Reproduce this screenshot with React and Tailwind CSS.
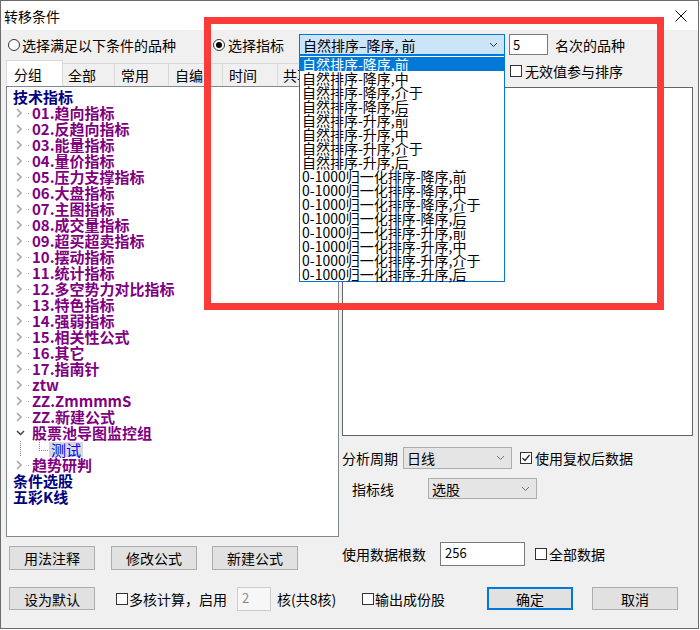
import React from "react";

function Radio({ checked }) {
  return (
    <span className="w-[12px] h-[12px] rounded-full border border-[#333] bg-white flex items-center justify-center shrink-0">
      {checked && <span className="w-[6px] h-[6px] rounded-full bg-black" />}
    </span>
  );
}

function Check({ checked }) {
  return (
    <span className="w-[12px] h-[12px] border border-[#333] bg-white shrink-0 flex items-center justify-center">
      {checked && (
        <svg width="10" height="10" viewBox="0 0 10 10">
          <path d="M1.5 5 L4 7.5 L8.5 2" stroke="#222" strokeWidth="1.2" fill="none" />
        </svg>
      )}
    </span>
  );
}

function Down({ color = "#555" }) {
  return (
    <svg width="9" height="6" viewBox="0 0 9 6">
      <path d="M1 1 L4.5 4.5 L8 1" stroke={color} strokeWidth="1" fill="none" />
    </svg>
  );
}

function Btn({ children, primary, className = "" }) {
  return (
    <div
      className={
        "h-[23px] w-[86px] flex items-center justify-center text-[14px] leading-[16px] bg-[#e1e1e1] text-black shrink-0 " +
        (primary ? "border-2 border-[#0078d7] " : "border border-[#adadad] ") +
        className
      }
    >
      {children}
    </div>
  );
}

const children = [
  "01.趋向指标",
  "02.反趋向指标",
  "03.能量指标",
  "04.量价指标",
  "05.压力支撑指标",
  "06.大盘指标",
  "07.主图指标",
  "08.成交量指标",
  "09.超买超卖指标",
  "10.摆动指标",
  "11.统计指标",
  "12.多空势力对比指标",
  "13.特色指标",
  "14.强弱指标",
  "15.相关性公式",
  "16.其它",
  "17.指南针",
  "ztw",
  "ZZ.ZmmmmS",
  "ZZ.新建公式",
];

const listItems = [
  "自然排序-降序,前",
  "自然排序-降序,中",
  "自然排序-降序,介于",
  "自然排序-降序,后",
  "自然排序-升序,前",
  "自然排序-升序,中",
  "自然排序-升序,介于",
  "自然排序-升序,后",
  "0-1000归一化排序-降序,前",
  "0-1000归一化排序-降序,中",
  "0-1000归一化排序-降序,介于",
  "0-1000归一化排序-降序,后",
  "0-1000归一化排序-升序,前",
  "0-1000归一化排序-升序,中",
  "0-1000归一化排序-升序,介于",
  "0-1000归一化排序-升序,后",
];

function ChildRow({ text, expanded }) {
  return (
    <div className="h-[16px] flex items-center">
      <svg width="25" height="16" viewBox="0 0 25 16" className="shrink-0">
        {expanded ? (
          <path d="M10 6 L13.5 9.5 L17 6" stroke="#404040" strokeWidth="1.5" fill="none" />
        ) : (
          <path d="M10 4 L14 8 L10 12" stroke="#a6a6a6" strokeWidth="1.6" fill="none" />
        )}
        {!expanded && <rect x="21" y="8" width="1" height="1" fill="#888" />}
      </svg>
      <span className="text-[15px] leading-[16px] font-bold text-[#800080] whitespace-nowrap">{text}</span>
    </div>
  );
}

export default function App() {
  return (
    <div className="relative w-[699px] h-[629px] border border-[#6b6b6b] bg-[#f0f0f0] font-['Noto_Sans_CJK_SC',sans-serif] text-black overflow-hidden">
      {/* Title bar */}
      <div className="h-[29px] bg-white flex items-center justify-between">
        <span className="pl-[3px] text-[14px] leading-[16px]">转移条件</span>
        <svg width="12" height="12" viewBox="0 0 12 12" className="mr-[11px]">
          <path d="M0.5 0.5 L11.5 11.5 M11.5 0.5 L0.5 11.5" stroke="#111" strokeWidth="1" />
        </svg>
      </div>

      {/* Row 1 */}
      <div className="mt-[4px] h-[21px] flex items-center pl-[7px]">
        <div className="w-[205px] flex items-center gap-[2px] shrink-0">
          <Radio />
          <span className="text-[14px] leading-[16px] whitespace-nowrap">选择满足以下条件的品种</span>
        </div>
        <div className="w-[86px] flex items-center gap-[3px] shrink-0">
          <Radio checked />
          <span className="text-[14px] leading-[16px] whitespace-nowrap">选择指标</span>
        </div>
        <div className="w-[206px] h-[21px] border border-[#0078d7] bg-[#cce4f7] flex items-center justify-between pl-[3px] pr-[6px] shrink-0">
          <span className="text-[14px] leading-[16px] whitespace-nowrap">自然排序–降序, 前</span>
          <Down color="#333" />
        </div>
        <div className="ml-[4px] w-[39px] h-[21px] border border-[#7a7a7a] bg-white flex items-center pl-[3px] shrink-0">
          <span className="text-[13px] leading-[14px]">5</span>
        </div>
        <span className="ml-[7px] text-[14px] leading-[16px] whitespace-nowrap">名次的品种</span>
      </div>

      {/* Columns */}
      <div className="mt-[5px] flex items-start">
        {/* Left column */}
        <div className="ml-[5px] w-[333px] flex flex-col shrink-0">
          <div className="h-[26px] flex items-end overflow-hidden">
            <div className="w-[57px] h-[26px] bg-white border-t border-l border-r border-[#d9d9d9] pl-[7px] flex items-center text-[14px] leading-[16px] shrink-0">分组</div>
            <div className="w-[52px] h-[23px] border-t border-r border-[#d9d9d9] pl-[5px] flex items-center text-[14px] leading-[16px] shrink-0">全部</div>
            <div className="w-[54px] h-[23px] border-t border-r border-[#d9d9d9] pl-[6px] flex items-center text-[14px] leading-[16px] shrink-0">常用</div>
            <div className="w-[54px] h-[23px] border-t border-r border-[#d9d9d9] pl-[6px] flex items-center text-[14px] leading-[16px] shrink-0">自编</div>
            <div className="w-[55px] h-[23px] border-t border-r border-[#d9d9d9] pl-[6px] flex items-center text-[14px] leading-[16px] shrink-0">时间</div>
            <div className="w-[55px] h-[23px] border-t border-r border-[#d9d9d9] pl-[5px] flex items-center text-[14px] leading-[16px] shrink-0">共享</div>
          </div>
          <div className="h-[451px] border border-[#828790] bg-white pt-[2px] pl-[6px] flex flex-col">
            <div className="h-[16px] flex items-center text-[15px] leading-[16px] font-bold text-[#000080]">技术指标</div>
            <div className="-ml-[6px] flex flex-col">
              {children.map((t) => (
                <ChildRow key={t} text={t} />
              ))}
              <ChildRow text="股票池导图监控组" expanded />
              <div className="h-[16px] flex items-center">
                <svg width="42" height="16" viewBox="0 0 42 16" className="shrink-0">
                  <line x1="13.5" y1="0" x2="13.5" y2="16" stroke="#888" strokeDasharray="1 1" />
                  <line x1="32.5" y1="1" x2="32.5" y2="9" stroke="#888" strokeDasharray="1 1" />
                  <line x1="32" y1="9.5" x2="41" y2="9.5" stroke="#888" strokeDasharray="1 1" />
                </svg>
                <span className="h-[15px] bg-[#d9d9d9] px-[2px] text-[15px] leading-[15px] text-[#0000ff]">测试</span>
              </div>
              <ChildRow text="趋势研判" />
            </div>
            <div className="h-[16px] flex items-center text-[15px] leading-[16px] font-bold text-[#000080]">条件选股</div>
            <div className="h-[16px] flex items-center text-[15px] leading-[16px] font-bold text-[#000080]">五彩K线</div>
          </div>
          <div className="mt-[9px] h-[24px] flex items-start">
            <Btn className="ml-[3px] h-[24px]">用法注释</Btn>
            <Btn className="ml-[16px] w-[85px] h-[24px]">修改公式</Btn>
            <Btn className="ml-[15px] w-[85px] h-[24px]">新建公式</Btn>
          </div>
        </div>

        {/* Right column */}
        <div className="ml-[3px] w-[351px] flex flex-col shrink-0">
          <div className="h-[27px] pt-[5px] pl-[168px] flex items-start gap-[3px]">
            <Check />
            <span className="text-[14px] leading-[13px] whitespace-nowrap">无效值参与排序</span>
          </div>
          <div className="h-[349px] border border-[#646464] bg-white" />
          <div className="mt-[11px] h-[22px] flex items-center">
            <span className="text-[14px] leading-[16px] whitespace-nowrap">分析周期</span>
            <div className="ml-[5px] w-[109px] h-[22px] border border-[#adadad] bg-[#e5e5e5] flex items-center justify-between pl-[3px] pr-[6px]">
              <span className="text-[14px] leading-[16px]">日线</span>
              <Down color="#707070" />
            </div>
            <div className="ml-[8px] flex items-center gap-[3px]">
              <Check checked />
              <span className="text-[14px] leading-[16px] whitespace-nowrap">使用复权后数据</span>
            </div>
          </div>
          <div className="mt-[9px] h-[21px] flex items-center">
            <span className="ml-[10px] w-[76px] text-[14px] leading-[16px] whitespace-nowrap">指标线</span>
            <div className="w-[109px] h-[21px] border border-[#adadad] bg-[#e5e5e5] flex items-center justify-between pl-[3px] pr-[6px]">
              <span className="text-[14px] leading-[16px]">选股</span>
              <Down color="#707070" />
            </div>
          </div>
          <div className="mt-[43px] h-[24px] flex items-center">
            <span className="w-[98px] text-[14px] leading-[16px] whitespace-nowrap">使用数据根数</span>
            <div className="w-[85px] h-[24px] border border-[#7a7a7a] bg-white pl-[4px] pt-[3px]">
              <span className="block text-[13px] leading-[14px]">256</span>
            </div>
            <div className="ml-[10px] flex items-center gap-[2px]">
              <Check />
              <span className="text-[14px] leading-[16px] whitespace-nowrap">全部数据</span>
            </div>
          </div>
        </div>
      </div>

      {/* Bottom row */}
      <div className="mt-[17px] h-[24px] flex items-start">
        <Btn className="ml-[8px]">设为默认</Btn>
        <div className="ml-[21px] w-[121px] h-[23px] flex items-center gap-[1px] shrink-0">
          <Check />
          <span className="text-[14px] leading-[16px] whitespace-nowrap">多核计算，启用</span>
        </div>
        <div className="w-[34px] h-[24px] border border-[#cccccc] bg-[#f7f7f7] pl-[4px] pt-[3px] shrink-0">
          <span className="block text-[13px] leading-[14px] text-[#8a8a8a]">2</span>
        </div>
        <div className="ml-[6px] w-[85px] h-[23px] flex items-center shrink-0">
          <span className="text-[14px] leading-[16px] whitespace-nowrap">核(共8核)</span>
        </div>
        <div className="w-[125px] h-[23px] flex items-center gap-[1px] shrink-0">
          <Check />
          <span className="text-[14px] leading-[16px] whitespace-nowrap">输出成份股</span>
        </div>
        <Btn primary>确定</Btn>
        <Btn className="ml-[19px]">取消</Btn>
      </div>

      {/* Open dropdown list */}
      <div className="absolute left-[298px] top-[54px] w-[206px] h-[227px] border border-[#0078d7] bg-white pt-[1px]">
        {listItems.map((t, i) => (
          <div
            key={t}
            className={
              "h-[14px] pl-[2px] text-[14px] leading-[14px] whitespace-nowrap " +
              (i === 0 ? "bg-[#0078d7] text-white" : "text-black")
            }
          >
            {t}
          </div>
        ))}
      </div>

      {/* Red annotation rectangle */}
      <div className="absolute left-[203px] top-[16px] w-[460px] h-[293px] border-[7px] border-[#fb3a3a] pointer-events-none" />
    </div>
  );
}
